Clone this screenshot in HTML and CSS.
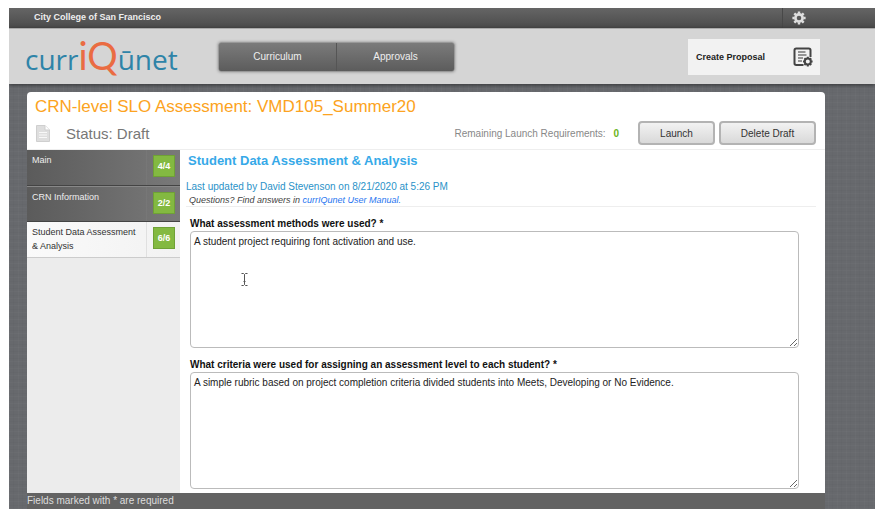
FILE: index.html
```
<!DOCTYPE html>
<html lang="en">
<head>
    <meta charset="UTF-8">
    <meta name="viewport" content="width=device-width, initial-scale=1.0">
    <title>CRN-level SLO Assessment</title>
    <link rel="stylesheet" href="styles.css">
</head>
<body>
    <div class="app">
        <!-- Top bar -->
        <div class="topbar">
            <span class="college">City College of San Francisco</span>
            <button class="settings" type="button" aria-label="Settings">
                <svg width="14" height="14" viewBox="0 0 14 14">
                    <g fill="none" stroke="#dedede">
                        <circle cx="7" cy="7" r="3.6" stroke-width="2.6"/>
                        <path d="M7 0.4v2.2M7 11.4v2.2M0.4 7h2.2M11.4 7h2.2M2.3 2.3l1.6 1.6M10.1 10.1l1.6 1.6M2.3 11.7l1.6-1.6M10.1 3.9l1.6-1.6" stroke-width="2.4"/>
                    </g>
                </svg>
            </button>
        </div>

        <!-- Logo and navigation -->
        <header class="header">
            <a class="logo" href="#">curr<span class="logo-iq">iQ</span>ūnet</a>
            <nav class="nav">
                <a href="#">Curriculum</a>
                <a href="#">Approvals</a>
            </nav>
            <button class="create" type="button">
                <span>Create Proposal</span>
                <svg width="20" height="20" viewBox="0 0 20 20">
                    <path d="M10.5 18H3.2Q1.5 18 1.5 16.3V3.2Q1.5 1.5 3.2 1.5H15.8Q17.5 1.5 17.5 3.2V10" fill="none" stroke="#444" stroke-width="2"/>
                    <path d="M5 5h7.5M5 8h8.5M5 11h5M5 14h4" stroke="#777" stroke-width="1.5"/>
                    <circle cx="14.8" cy="14.6" r="3" fill="#f2f2f2" stroke="#444" stroke-width="2"/>
                    <path d="M14.8 9.8v1.6M14.8 17.8v1.6M10 14.6h1.6M18 14.6h1.6M11.4 11.2l1.2 1.2M17 16.8l1.2 1.2M11.4 18l1.2-1.2M17 12.4l1.2-1.2" stroke="#444" stroke-width="2"/>
                </svg>
            </button>
        </header>

        <main class="panel">
            <div class="panel-head">
                <h1>CRN-level SLO Assessment: VMD105_Summer20</h1>
                <div class="status-row">
                    <svg class="doc" width="14" height="17" viewBox="0 0 14 17">
                        <path d="M0.5 0.5H9L13.5 5V16.5H0.5Z" fill="#dedede" stroke="#cfcfcf"/>
                        <path d="M9 0.5V5H13.5" fill="#fff" stroke="#cfcfcf"/>
                        <path d="M3 7.5h8M3 10h8M3 12.5h8" stroke="#f8f8f8"/>
                    </svg>
                    <span class="status">Status: Draft</span>
                    <span class="remaining">Remaining Launch Requirements: <b>0</b></span>
                    <button class="btn launch" type="button">Launch</button>
                    <button class="btn delete" type="button">Delete Draft</button>
                </div>
            </div>

            <div class="panel-body">
                <!-- Section list -->
                <aside class="sidebar">
                    <a class="item" href="#"><span class="label">Main</span><span class="count"><b>4/4</b></span></a>
                    <a class="item" href="#"><span class="label">CRN Information</span><span class="count"><b>2/2</b></span></a>
                    <a class="item active" href="#"><span class="label">Student Data Assessment &amp; Analysis</span><span class="count"><b>6/6</b></span></a>
                </aside>

                <section class="content">
                    <div class="intro">
                        <h2>Student Data Assessment &amp; Analysis</h2>
                        <p class="updated">Last updated by David Stevenson on 8/21/2020 at 5:26 PM</p>
                        <p class="help">Questions? Find answers in <a href="#">currIQunet User Manual.</a></p>
                    </div>
                    <div class="field">
                        <label for="methods">What assessment methods were used? *</label>
                        <textarea id="methods">A student project requiring font activation and use.</textarea>
                        <svg class="ibeam" width="7" height="13" viewBox="0 0 7 13">
                            <path d="M0.5 0.5H2.5L3.5 1.5L4.5 0.5H6.5M3.5 1.5V11.5M0.5 12.5H2.5L3.5 11.5L4.5 12.5H6.5M2.5 8.5h2" fill="none" stroke="#555"/>
                        </svg>
                    </div>
                    <div class="field">
                        <label for="criteria">What criteria were used for assigning an assessment level to each student? *</label>
                        <textarea id="criteria">A simple rubric based on project completion criteria divided students into Meets, Developing or No Evidence.</textarea>
                    </div>
                </section>
            </div>
        </main>
        <footer class="footer">Fields marked with * are required</footer>
    </div>
</body>
</html>
```
FILE: styles.css
```
* {
    box-sizing: border-box;
}

body {
    margin: 0;
    padding: 8px 7px 5px 9px;
    min-height: 100vh;
    display: flex;
    background-color: #fff;
    font-family: "Liberation Sans", Arial, sans-serif;
    font-size: 11px;
    color: #222;
}

button {
    font-family: inherit;
    cursor: pointer;
}

a {
    text-decoration: none;
}

h1, h2, p {
    margin: 0;
    font-weight: normal;
}

.app {
    flex: 1;
    display: flex;
    flex-direction: column;
    overflow: hidden;
    background-color: #67696d;
    background-image:
        repeating-linear-gradient(0deg, rgba(255, 255, 255, 0.02) 0 1px, transparent 1px 3px, rgba(0, 0, 0, 0.02) 3px 4px, transparent 4px 7px),
        repeating-linear-gradient(90deg, rgba(255, 255, 255, 0.02) 0 1px, transparent 1px 4px, rgba(0, 0, 0, 0.02) 4px 5px, transparent 5px 9px);
}

/* Top bar */
.topbar {
    height: 20px;
    padding: 0 69px 0 25px;
    display: flex;
    align-items: center;
    justify-content: space-between;
    background: linear-gradient(#656565, #4b4b4b);
}

.college {
    padding-bottom: 3px;
    font-size: 9px;
    font-weight: bold;
    color: #eee;
}

.settings {
    display: flex;
    align-items: center;
    height: 20px;
    padding: 0 0 1px 9px;
    border: none;
    border-left: 1px solid #484848;
    background: none;
}

/* Header */
.header {
    height: 56px;
    padding: 0 55px 0 16px;
    display: flex;
    align-items: center;
    background-color: #d5d5d5;
    border-top: 1px solid #aaa;
    box-shadow: 0 1px 4px rgba(0, 0, 0, 0.5);
}

.logo {
    width: 193px;
    font-family: "Open Sans", sans-serif;
    font-size: 28px;
    line-height: 40px;
    color: #2e84a8;
}

.logo-iq {
    font-family: Lato, sans-serif;
    font-size: 38px;
    color: #ea6c42;
}

.nav {
    display: flex;
    width: 237px;
    border: 1px solid #999;
    border-radius: 3px;
    background: linear-gradient(#7b7b7b, #5c5c5c);
    box-shadow: 0 0 3px #888;
}

.nav a {
    flex: 1;
    font-size: 10px;
    line-height: 28px;
    text-align: center;
    color: #eee;
}

.nav a + a {
    border-left: 1px solid #555;
}

.create {
    margin-left: auto;
    width: 132px;
    height: 36px;
    padding: 0 7px 0 8px;
    display: flex;
    align-items: center;
    justify-content: space-between;
    border: none;
    background-color: #f2f2f2;
    font-size: 9px;
    font-weight: bold;
    color: #222;
}

/* Main panel */
.panel {
    flex: 1;
    margin: 8px 50px 0 18px;
    display: flex;
    flex-direction: column;
    background-color: #fff;
    border-radius: 4px 4px 0 0;
}

.panel-head {
    padding: 4px 9px 4px 8px;
    border-bottom: 1px solid #eee;
}

.panel-head h1 {
    font-size: 17px;
    line-height: 22px;
    color: #fca321;
}

.status-row {
    display: flex;
    align-items: center;
    padding-top: 3px;
}

.doc {
    margin: 0 16px 0 1px;
}

.status {
    font-size: 15px;
    color: #777;
}

.remaining {
    margin-left: auto;
    font-size: 10px;
    color: #888;
}

.remaining b {
    margin: 0 19px 0 5px;
    color: #6db51c;
}

.btn {
    height: 24px;
    padding: 0;
    border: 2px solid #b3b3b3;
    border-radius: 4px;
    background: linear-gradient(#f2f2f2, #d9d9d9);
    font-size: 10px;
    color: #333;
}

.launch {
    width: 77px;
}

.delete {
    width: 97px;
    margin-left: 4px;
}

.panel-body {
    flex: 1;
    display: flex;
}

/* Sidebar */
.sidebar {
    width: 153px;
    background-color: #ececec;
}

.item {
    display: flex;
    height: 36px;
    border-bottom: 1px solid #444;
    background: linear-gradient(90deg, #5b5b5b, #797979);
    font-size: 9px;
    line-height: 14px;
    color: #eee;
}

.item + .item {
    border-top: 1px solid #888;
}

.item .label {
    flex: 1;
    padding: 3px 7px 0 5px;
}

.item .count {
    width: 34px;
    padding: 5px 5px 0 6px;
    border-left: 1px solid #777;
}

.item b {
    display: block;
    height: 22px;
    border: 1px solid #6fa136;
    background-color: #83b941;
    font-size: 9px;
    line-height: 20px;
    text-align: center;
    color: #fff;
}

.item.active {
    border-top: none;
    border-bottom-color: #ccc;
    background: linear-gradient(90deg, #fafafa, #f2f2f2);
    color: #333;
}

.item.active .count {
    border-left-color: #e0e0e0;
}

/* Content */
.content {
    flex: 1;
    padding: 0 9px 4px 6px;
}

.intro {
    border-bottom: 1px solid #eee;
}

.intro h2 {
    padding-left: 2px;
    font-size: 13px;
    font-weight: bold;
    line-height: 22px;
    color: #36a9e8;
}

.updated {
    padding-top: 8px;
    font-size: 10px;
    line-height: 14px;
    color: #2a92c8;
}

.help {
    padding-left: 3px;
    font-size: 9px;
    font-style: italic;
    line-height: 12px;
    color: #444;
}

.help a {
    color: #1f75f0;
}

.field {
    position: relative;
    padding: 10px 17px 0 4px;
}

.field label {
    display: block;
    font-size: 10px;
    font-weight: bold;
    line-height: 14px;
    color: #111;
}

.field textarea {
    display: block;
    width: 100%;
    height: 117px;
    padding: 3px;
    border: 1px solid #bbb;
    border-radius: 4px;
    background-color: #fff;
    font-family: inherit;
    font-size: 10px;
    line-height: 14px;
    color: #222;
}

/* Text cursor over the first answer */
.ibeam {
    position: absolute;
    top: 66px;
    left: 55px;
}

/* Footer */
.footer {
    margin: 0 50px 0 18px;
    background-color: #636363;
    font-size: 10px;
    line-height: 16px;
    color: #ddd;
}
```
